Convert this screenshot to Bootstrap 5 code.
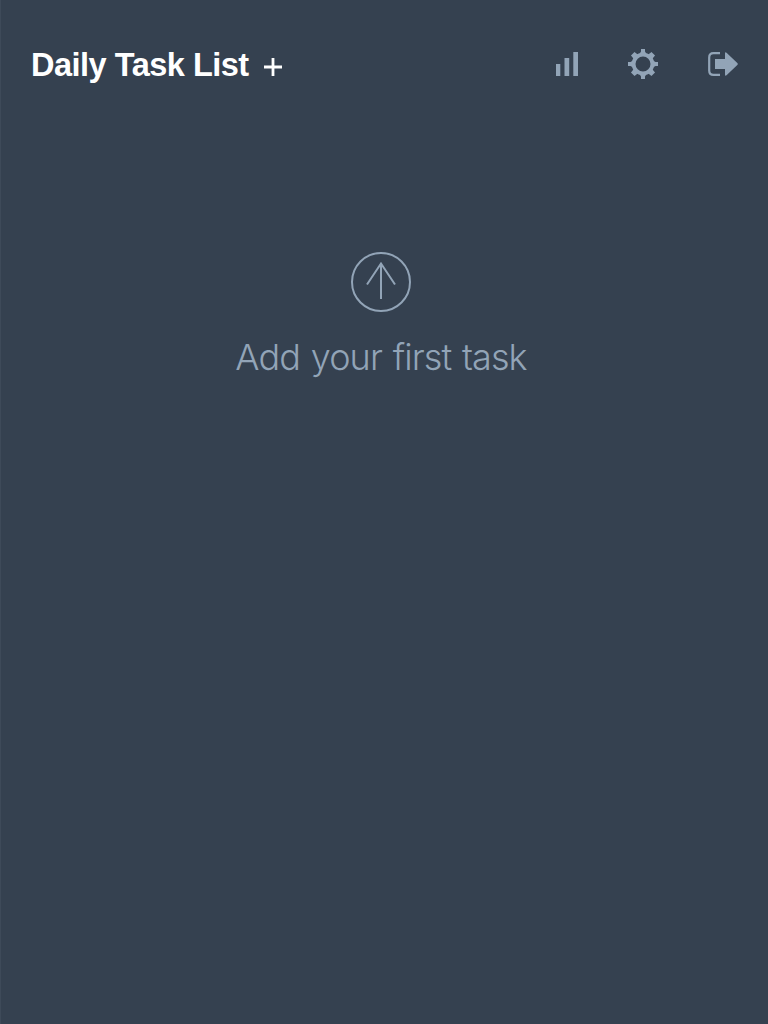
<!DOCTYPE html>
<html lang="en">
<head>
<meta charset="utf-8">
<meta name="viewport" content="width=device-width, initial-scale=1">
<title>Daily Task List</title>
<link href="https://cdn.jsdelivr.net/npm/bootstrap@5.3.0/dist/css/bootstrap.min.css" rel="stylesheet">
<style>
  body { background: #354150; color: #fff; border-left: 1px solid #3e4a59; font-family: "Liberation Sans", Arial, sans-serif; }
  .topbar { height: 128px; padding: 0 30px; }
  .list-title { font-size: 32.500px; font-weight: 700; line-height: 40px; letter-spacing: -.5px; padding-top: 2px; }
  .add-btn { width: 18px; height: 18px; margin-left: 15px; margin-top: 6px; }
  .muted-tone { color: #92a4b7; }
  .tools { gap: 50px; }
  .empty-state { padding-top: 123px; width: 760px; }
  .empty-text { font-family: Inter, sans-serif; font-weight: 300; font-size: 36px; line-height: 44px; letter-spacing: -.9px; word-spacing: 1.5px; margin-top: 22px; }
</style>
</head>
<body class="min-vh-100">
<header class="topbar d-flex align-items-center justify-content-between">
  <div class="d-flex align-items-center">
    <h1 class="list-title text-nowrap mb-0">Daily Task List</h1>
    <button class="add-btn btn p-0 border-0 d-flex text-white" type="button" aria-label="Add task">
      <svg width="18" height="18" viewBox="0 0 18 18" stroke="currentColor" stroke-width="2.800"><path d="M0 9H18M9 0V18"/></svg>
    </button>
  </div>
  <nav class="tools muted-tone d-flex align-items-center">
    <svg width="23" height="24" viewBox="0 0 23 24" fill="currentColor" aria-label="Statistics"><path d="M1 12h4.300v12H1zM9.500 6h4.700v18H9.500zM18.300 0H23v24h-4.700z"/></svg>
    <svg width="30" height="30" viewBox="-15 -15 30 30" fill="none" stroke="currentColor" aria-label="Settings">
      <circle r="9.400" stroke-width="3.800"/>
      <g fill="currentColor" stroke="none">
        <path id="teeth" d="M-3.600-10-2-12.500V-15H2v2.500l1.600 2.500zM-3.600 10-2 12.500V15H2v-2.500l1.600-2.500z"/>
        <path id="corner-teeth" d="M-3-10-2.500-14.500H2.500L3-10zM-3 10-2.500 14.500H2.500L3 10z" transform="rotate(45)"/>
        <use href="#teeth" transform="rotate(90)"/>
        <use href="#corner-teeth" transform="rotate(90)"/>
      </g>
    </svg>
    <svg width="30" height="24" viewBox="0 0 30 24" fill="currentColor" aria-label="Sign out"><path d="M12 1.100H5.500Q1.200 1.100 1.200 5.500V18.500Q1.200 22.900 5.500 22.900H12" fill="none" stroke="currentColor" stroke-width="2.200"/><path d="M7 7H17V1.600Q17-.6 18.800 1L29.300 11Q30.300 12 29.300 13L18.800 23Q17 24.600 17 22.400V17H7z"/></svg>
  </nav>
</header>
<main class="empty-state muted-tone d-flex flex-column align-items-center text-center">
  <svg width="62" height="62" viewBox="0 0 62 62" fill="none" stroke="currentColor" stroke-width="2" aria-hidden="true"><circle cx="31" cy="31" r="29"/><path d="M31 48V13M17 33.500 31 12.500 45 33.500"/></svg>
  <p class="empty-text text-nowrap mb-0">Add your first task</p>
</main>
<script src="https://cdn.jsdelivr.net/npm/bootstrap@5.3.0/dist/js/bootstrap.bundle.min.js"></script>
</body>
</html>
